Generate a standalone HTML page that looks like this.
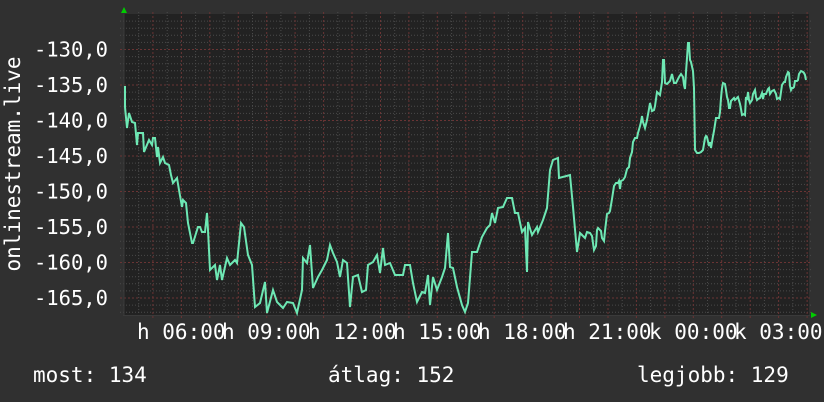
<!DOCTYPE html>
<html><head><meta charset="utf-8"><style>
html,body{margin:0;padding:0;background:#303030;}
svg{display:block}
text{font-family:"DejaVu Sans Mono","Liberation Mono",monospace;fill:#fff;}
</style></head><body>
<svg width="824" height="402" viewBox="0 0 824 402" xmlns="http://www.w3.org/2000/svg">
<rect width="824" height="402" fill="#303030"/>
<rect x="124" y="14" width="685" height="301" fill="#222222"/>
<g id="grid"></g>
<polygon points="121,13 127,13 124,7" fill="#00cc00"/>
<polygon points="811,312 811,318 817,315" fill="#00cc00"/>
<line x1="124" y1="14" x2="124" y2="316" stroke="#3a3a3a" stroke-width="1"/>
<line x1="123" y1="315.5" x2="810" y2="315.5" stroke="#3a3a3a" stroke-width="1"/>
<polyline fill="none" stroke="#6ee8b4" stroke-width="2" stroke-linejoin="miter" points="125,86 125,107 127,128 129,113 132,122 135,123 137,145 138,133 143,133 144,152 149,140 152,145 153,138 155,138 157,157 158,147 160,163 163,157 165,163 169,165 171,175 173,183 177,178 179,190 182,207 183,200 186,203 188,223 192,243 193,243 198,227 200,227 202,232 205,232 207,213 208,230 210,270 215,265 217,280 220,265 222,280 227,258 230,265 235,260 237,263 241,223 244,227 248,255 252,265 255,307 260,303 265,282 267,313 273,290 277,302 283,308 287,302 293,303 297,313 302,290 303,258 307,263 310,245 313,288 318,277 322,270 327,260 330,245 333,253 337,262 340,277 343,260 347,263 350,307 353,277 358,275 362,292 366,290 368,265 373,262 377,255 380,273 383,248 385,265 390,263 395,275 403,275 405,265 410,265 413,283 417,302 422,292 425,293 428,275 430,305 433,277 437,290 442,277 445,268 448,233 450,267 453,268 457,287 462,305 465,312 468,303 472,252 477,252 482,237 487,228 490,225 492,213 495,223 498,208 503,207 507,198 512,198 515,213 518,213 522,232 525,228 527,272 528,222 532,235 537,227 538,232 543,220 547,208 550,170 553,160 558,158 559,178 570,175 573,207 577,252 580,233 585,238 587,232 590,233 592,236 593,243 594,250 596,246 597,230 598,228 601,231 602,238 604,241 605,231 607,214 609,213 610,211 612,199 614,186 616,183 618,183 619,181 620,189 621,181 623,180 625,177 627,169 629,167 630,158 632,152 633,142 635,138 637,138 638,133 640,126 641,122 642,116 643,122 645,128 647,120 649,109 650,103 652,111 654,110 655,106 657,92 660,95 662,82 663,60 664,60 665,83 667,84 668,83 670,81 672,74 674,83 676,83 679,77 681,74 683,77 684,85 685,89 686,72 687,58 688,43 689,43 690,60 691,62 693,71 694,88 695,150 697,153 699,153 701,152 703,150 705,138 706,136 707,137 709,146 710,142 711,148 713,136 714,131 716,118 717,118 719,118 720,112 721,98 722,88 723,83 725,84 726,90 727,97 728,100 729,108 730,108 731,101 733,99 734,98 735,100 738,97 740,104 741,109 742,115 744,114 745,115 746,97 747,100 748,92 749,100 750,103 752,100 753,94 755,90 756,97 757,100 758,99 760,98 762,93 763,99 764,94 766,94 768,89 769,88 770,94 772,91 774,90 776,94 777,99 779,98 780,99 782,85 784,82 785,82 786,77 788,72 789,73 790,86 791,90 792,88 793,88 794,87 795,81 797,81 798,80 799,74 801,71 803,72 804,73 805,75 806,80"/>
<g font-size="20.5" text-anchor="end">
<text x="108" y="56.5">-130,0</text>
<text x="108" y="92">-135,0</text>
<text x="108" y="127.5">-140,0</text>
<text x="108" y="163">-145,0</text>
<text x="108" y="198.5">-150,0</text>
<text x="108" y="234">-155,0</text>
<text x="108" y="269.5">-160,0</text>
<text x="108" y="305">-165,0</text>
</g>
<text font-size="21" transform="translate(20,164) rotate(-90)" text-anchor="middle">onlinestream.live</text>
<g font-size="21">
<text x="137" y="339">h 06:00</text>
<text x="222" y="339">h 09:00</text>
<text x="308" y="339">h 12:00</text>
<text x="393" y="339">h 15:00</text>
<text x="478" y="339">h 18:00</text>
<text x="563" y="339">h 21:00</text>
<text x="649" y="339">k 00:00</text>
<text x="734" y="339">k 03:00</text>
<text x="33" y="382">most: 134</text>
<text x="328" y="382">átlag: 152</text>
<text x="637" y="382">legjobb: 129</text>
</g>
</svg>
<script>
(function(){
var g=document.getElementById('grid'),s='';
for(var n=-5;n<=38;n++){var y=49.5+n*7.1;if(y<15||y>314)continue;var red=(n%5===0);
s+='<line x1="120" x2="812" y1="'+y.toFixed(1)+'" y2="'+y.toFixed(1)+'" stroke="'+(red?'#6a3434':'#4a4a4a')+'" stroke-width="1" stroke-dasharray="'+(red?'2,2':'1,2')+'"/>';}
for(var k=-1;k<50;k++){var x=124.5+k*14.22;if(x<125||x>808)continue;var red=(k%2===0);
s+='<line y1="12" y2="318" x1="'+x.toFixed(1)+'" x2="'+x.toFixed(1)+'" stroke="'+(red?'#6a3434':'#4a4a4a')+'" stroke-width="1" stroke-dasharray="'+(red?'2,2':'1,2')+'"/>';}
g.innerHTML=s;
})();
</script>
</body></html>
